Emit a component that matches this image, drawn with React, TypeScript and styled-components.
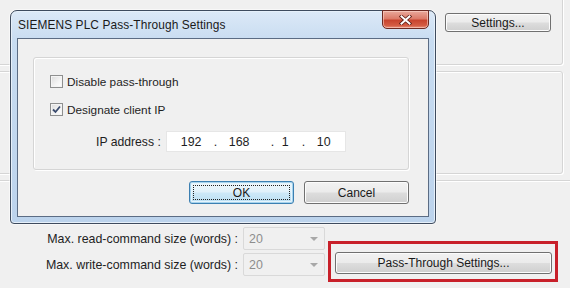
import React, { useState } from 'react'
import styled, { createGlobalStyle, css } from 'styled-components'

const GlobalStyle = createGlobalStyle`
  html, body {
    margin: 0;
    padding: 0;
    background: #f0f0f0;
  }
  body {
    font-family: "Liberation Sans", Arial, sans-serif;
    font-size: 12px;
    color: #1e1e1e;
  }
`

const Screen = styled.div`
  position: relative;
  width: 570px;
  height: 288px;
  overflow: hidden;
  background: #f0f0f0;
`

// ---------- background window ----------

const BackWindow = styled.div`
  display: flex;
  flex-direction: column;
  margin-top: -3px;
`

const GroupBox = styled.div<{ $h: number; $gap?: number }>`
  height: ${(p) => p.$h}px;
  margin-top: ${(p) => p.$gap || 0}px;
  width: 573px;
  margin-left: -10px;
  box-sizing: border-box;
  border: 1px solid #d5d5d5;
  border-radius: 3px;
  box-shadow: inset 1px 1px 0 #fff, 1px 1px 0 #fff;
  display: flex;
  justify-content: flex-end;
  align-items: flex-start;
  padding: 15px 11px 0 0;
`

const Separator = styled.div`
  height: 1px;
  margin-top: 6px;
  background: #d5d5d5;
  box-shadow: 0 1px 0 #fff;
`

const buttonBase = css`
  box-sizing: border-box;
  border: 1px solid #707070;
  border-radius: 3px;
  background: linear-gradient(#f2f2f2 0%, #ebebeb 48%, #dddddd 52%, #cfcfcf 100%);
  box-shadow: inset 0 0 0 1px #fcfcfc;
  font-family: "Liberation Sans", Arial, sans-serif;
  font-size: 12px;
  color: #1a1a1a;
  display: flex;
  align-items: center;
  justify-content: center;
  padding: 0;
  cursor: default;
`

const WinButton = styled.button<{ $w: number; $h: number }>`
  ${buttonBase};
  width: ${(p) => p.$w}px;
  height: ${(p) => p.$h}px;
`

const DefaultButton = styled.button<{ $w: number; $h: number }>`
  ${buttonBase};
  width: ${(p) => p.$w}px;
  height: ${(p) => p.$h}px;
  border-color: #3c7fb1;
  background: linear-gradient(#eef7fc 0%, #e1f1fa 48%, #cde8f7 52%, #bcdff3 100%);
  box-shadow: inset 0 0 0 1px #a6d4ee, inset 0 0 0 2px #e6f4fc;
  position: relative;
  &::after {
    content: '';
    position: absolute;
    inset: 3px;
    border: 1px dotted #222;
  }
`

const SizeGrid = styled.div`
  display: grid;
  grid-template-columns: 238px 82px 1fr;
  grid-template-rows: 23px 23px;
  column-gap: 5px;
  row-gap: 3px;
  margin-top: 46px;
`

const SizeLabel = styled.div`
  display: flex;
  align-items: center;
  justify-content: flex-end;
  white-space: nowrap;
  font-size: 12.4px;
  color: #1e1e1e;
`

const Combo = styled.div`
  box-sizing: border-box;
  border: 1px solid #d9d9d9;
  border-radius: 2px;
  background: #f0f0f0;
  color: #8d8d8d;
  display: flex;
  align-items: center;
  justify-content: space-between;
  padding: 0 6px 0 5px;
  font-size: 12.4px;
`

const ComboArrow = styled.span`
  width: 0;
  height: 0;
  border-left: 4px solid transparent;
  border-right: 4px solid transparent;
  border-top: 4px solid #a8a8a8;
`

const Highlight = styled.div`
  grid-column: 3;
  grid-row: 1 / 3;
  margin: 14px 0 0 -2px;
  width: 230px;
  height: 41px;
  box-sizing: border-box;
  border: 3px solid #c8202a;
  padding: 8px 3px 0 4px;
`

// ---------- dialog ----------

const Dialog = styled.div`
  position: absolute;
  left: 10px;
  top: 10px;
  width: 426px;
  height: 214px;
  box-sizing: border-box;
  border: 1px solid #3e4b5e;
  border-radius: 7px 7px 4px 4px;
  background: linear-gradient(#dce9f7 0%, #c8dcf1 14%, #bcd3ec 100%);
  box-shadow: inset 0 0 0 1px #e6f0fa, 0 0 0 1px rgba(255, 255, 255, 0.5);
  display: flex;
  flex-direction: column;
`

const TitleBar = styled.div`
  height: 27px;
  display: flex;
  align-items: flex-start;
  justify-content: space-between;
  padding: 0 6px 0 7px;
`

const Title = styled.div`
  font-family: "Liberation Sans", Arial, sans-serif;
  font-size: 11.9px;
  color: #1a1a1a;
  padding-top: 7px;
  letter-spacing: 0.1px;
`

const CloseButton = styled.div`
  width: 47px;
  height: 19px;
  margin-top: -1px;
  box-sizing: border-box;
  border: 1px solid #6d2a22;
  border-radius: 0 0 5px 5px;
  background: linear-gradient(#e9a99c 0%, #dc7b69 45%, #c8442e 55%, #d45c43 85%, #e8917c 100%);
  box-shadow: inset 0 0 0 1px rgba(255, 220, 210, 0.55);
  display: flex;
  align-items: center;
  justify-content: center;
`

const Client = styled.div`
  flex: 1;
  margin: 0 6px 6px 6px;
  border: 1px solid #5b6c84;
  background: #f0f0f0;
  display: flex;
  flex-direction: column;
  padding: 18px 19px 0 15px;
`

const InnerGroup = styled.div`
  height: 113px;
  box-sizing: border-box;
  border: 1px solid #d5d5d5;
  border-radius: 3px;
  box-shadow: inset 1px 1px 0 #fff, 1px 1px 0 #fff;
  display: flex;
  flex-direction: column;
  padding: 17px 0 0 16px;
`

const CheckRow = styled.label`
  display: flex;
  align-items: center;
  gap: 4px;
  height: 13px;
  margin-bottom: 15px;
  font-size: 11.8px;
  color: #1e1e1e;
`

const Box = styled.span`
  width: 13px;
  height: 13px;
  box-sizing: border-box;
  border: 1px solid #8e8f8f;
  background: linear-gradient(135deg, #dcdcdc 0%, #f4f4f4 60%, #ffffff 100%);
  box-shadow: inset 0 0 0 1px #f4f4f4;
  display: flex;
  align-items: center;
  justify-content: center;
`

const IpRow = styled.div`
  display: flex;
  align-items: center;
  gap: 5px;
  margin: 0 0 0 46px;
`

const IpLabel = styled.span`
  font-size: 12.2px;
  white-space: nowrap;
`

const IpField = styled.div`
  width: 180px;
  height: 21px;
  box-sizing: border-box;
  background: #ffffff;
  border: 1px solid #e6e6e6;
  display: flex;
  align-items: center;
  padding-left: 14px;
  font-size: 12.4px;
  color: #1e1e1e;
`

const IpPart = styled.span<{ $w: number }>`
  width: ${(p) => p.$w}px;
  flex: none;
  white-space: pre;
`

const ButtonRow = styled.div`
  display: flex;
  justify-content: flex-end;
  gap: 10px;
  margin-top: 11px;
`

function Check({ checked }: { checked: boolean }) {
  return (
    <Box>
      {checked && (
        <svg width="9" height="9" viewBox="0 0 9 9">
          <path d="M1 4.5 L3.5 7 L8 1.5" fill="none" stroke="#3b4c6e" strokeWidth="1.8" />
        </svg>
      )}
    </Box>
  )
}

// each piece of the ip address with the width it takes in the field
const ipParts: [string, number][] = [
  ['192', 33],
  ['.', 15],
  ['168', 42],
  ['.', 11],
  ['1', 20],
  ['.', 15],
  ['10', 20],
]

const App = () => {
  let [disable, setDisable] = useState<boolean>(false)
  let [designate, setDesignate] = useState<boolean>(true)

  return (
    <Screen>
      <GlobalStyle />
      <BackWindow>
        <GroupBox $h={68}>
          <WinButton $w={106} $h={19}>Settings...</WinButton>
        </GroupBox>
        <GroupBox $h={103} $gap={6} />
        <Separator />
        <SizeGrid>
          <SizeLabel>Max. read-command size (words) :</SizeLabel>
          <Combo>
            20
            <ComboArrow />
          </Combo>
          <Highlight>
            <WinButton $w={217} $h={22}>Pass-Through Settings...</WinButton>
          </Highlight>
          <SizeLabel>Max. write-command size (words) :</SizeLabel>
          <Combo>
            20
            <ComboArrow />
          </Combo>
        </SizeGrid>
      </BackWindow>

      <Dialog>
        <TitleBar>
          <Title>SIEMENS PLC Pass-Through Settings</Title>
          <CloseButton>
            <svg width="13" height="10" viewBox="0 0 13 10">
              <path
                d="M2.5 1.5 L10.5 8.5 M10.5 1.5 L2.5 8.5"
                stroke="#5a1c14"
                strokeWidth="3.6"
                strokeLinecap="square"
              />
              <path
                d="M2.5 1.5 L10.5 8.5 M10.5 1.5 L2.5 8.5"
                stroke="#ffffff"
                strokeWidth="2"
                strokeLinecap="square"
              />
            </svg>
          </CloseButton>
        </TitleBar>
        <Client>
          <InnerGroup>
            <CheckRow onClick={() => setDisable(!disable)}>
              <Check checked={disable} />
              Disable pass-through
            </CheckRow>
            <CheckRow onClick={() => setDesignate(!designate)}>
              <Check checked={designate} />
              Designate client IP
            </CheckRow>
            <IpRow>
              <IpLabel>IP address :</IpLabel>
              <IpField>
                {ipParts.map(([text, w], idx) => (
                  <IpPart key={idx} $w={w}>{text}</IpPart>
                ))}
              </IpField>
            </IpRow>
          </InnerGroup>
          <ButtonRow>
            <DefaultButton $w={105} $h={23}>OK</DefaultButton>
            <WinButton $w={105} $h={23}>Cancel</WinButton>
          </ButtonRow>
        </Client>
      </Dialog>
    </Screen>
  )
}

export default App
